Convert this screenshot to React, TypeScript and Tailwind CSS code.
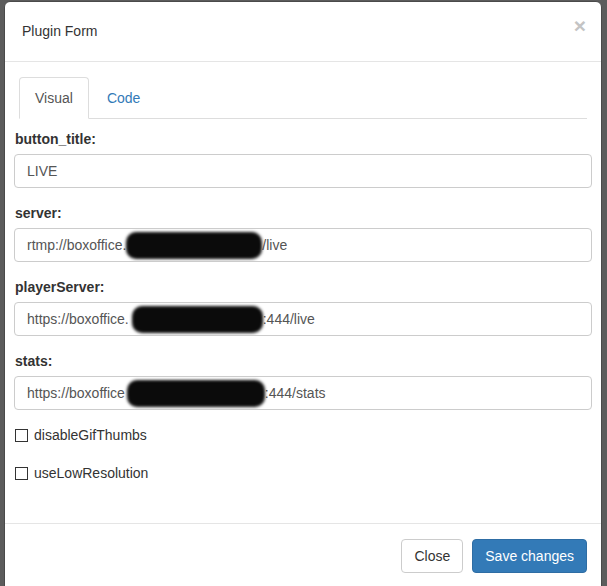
import React from "react";

const Scribble = ({ w, ml = 0 }: { w: number; ml?: number }) => (
    <span
        className="inline-block h-[27px] align-middle bg-[#0b0b0b] rounded-[10px] blur-[1.5px] -my-2"
        style={{ width: w, marginLeft: ml }}
    />
);

const Field = ({ label, children }: { label: string; children: React.ReactNode }) => (
    <div className="mb-[15px]">
        <div className="h-[20px] leading-[20px] mb-[5px] pl-px font-bold text-[14px] text-[#333]">{label}</div>
        <div className="h-[34px] border border-[#ccc] rounded-[4px] px-[12px] flex items-center text-[14px] text-[#555] whitespace-nowrap overflow-hidden">
            {children}
        </div>
    </div>
);

const Check = ({ label, className }: { label: string; className: string }) => (
    <div className={"flex items-center h-[20px] " + className}>
        <span className="w-[13px] h-[13px] border border-[#333] bg-white ml-[1px] mr-[6px]" />
        <span className="text-[14px] text-[#333]">{label}</span>
    </div>
);

export default function App() {
    return (
        <div className="w-[607px] h-[586px] overflow-hidden bg-[#5c5c5c] pt-px pl-[4px]" style={{ fontFamily: '"Liberation Sans", Arial, sans-serif' }}>
            <div className="w-[598px] h-[600px] bg-white rounded-[6px] border border-[#4a4a4a]">
                {/* header */}
                <div className="h-[60px] border-b border-[#e5e5e5] flex items-center justify-between pl-[17px] pr-[15px]">
                    <span className="text-[14px] text-[#333]">Plugin Form</span>
                    <span className="text-[21px] font-bold leading-none text-[#c4c4c4] self-start mt-[13px]">×</span>
                </div>

                {/* body */}
                <div className="h-[461px] px-[9px] pt-[15px]">
                    <div className="mx-[5px] h-[42px] flex border-b border-[#ddd]">
                        <div className="h-[42px] -mb-px px-[15px] flex items-center border border-[#ddd] border-b-white rounded-t-[4px] bg-white text-[14px] text-[#555] mr-[2px]">
                            Visual
                        </div>
                        <div className="h-[42px] px-[16px] flex items-center text-[14px] text-[#337ab7]">Code</div>
                    </div>

                    <div className="mt-[10px]">
                        <Field label="button_title:">LIVE</Field>
                        <Field label="server:">
                            rtmp://boxoffice.<Scribble w={136} />/live
                        </Field>
                        <Field label="playerServer:">
                            https://boxoffice.<Scribble w={131} ml={3} />:444/live
                        </Field>
                        <Field label="stats:">
                            https://boxoffice<Scribble w={138} ml={2} />:444/stats
                        </Field>
                    </div>

                    <Check label="disableGifThumbs" className="mt-[3px]" />
                    <Check label="useLowResolution" className="mt-[18px]" />
                </div>

                {/* footer */}
                <div className="border-t border-[#e5e5e5] pt-[15px] pr-[14px] flex justify-end gap-[9px]">
                    <button className="h-[34px] px-[12px] border border-[#ccc] rounded-[4px] bg-white text-[14px] text-[#333]">Close</button>
                    <button className="h-[34px] px-[12px] border border-[#2e6da4] rounded-[4px] bg-[#337ab7] text-[14px] text-white">Save changes</button>
                </div>
            </div>
        </div>
    );
}
